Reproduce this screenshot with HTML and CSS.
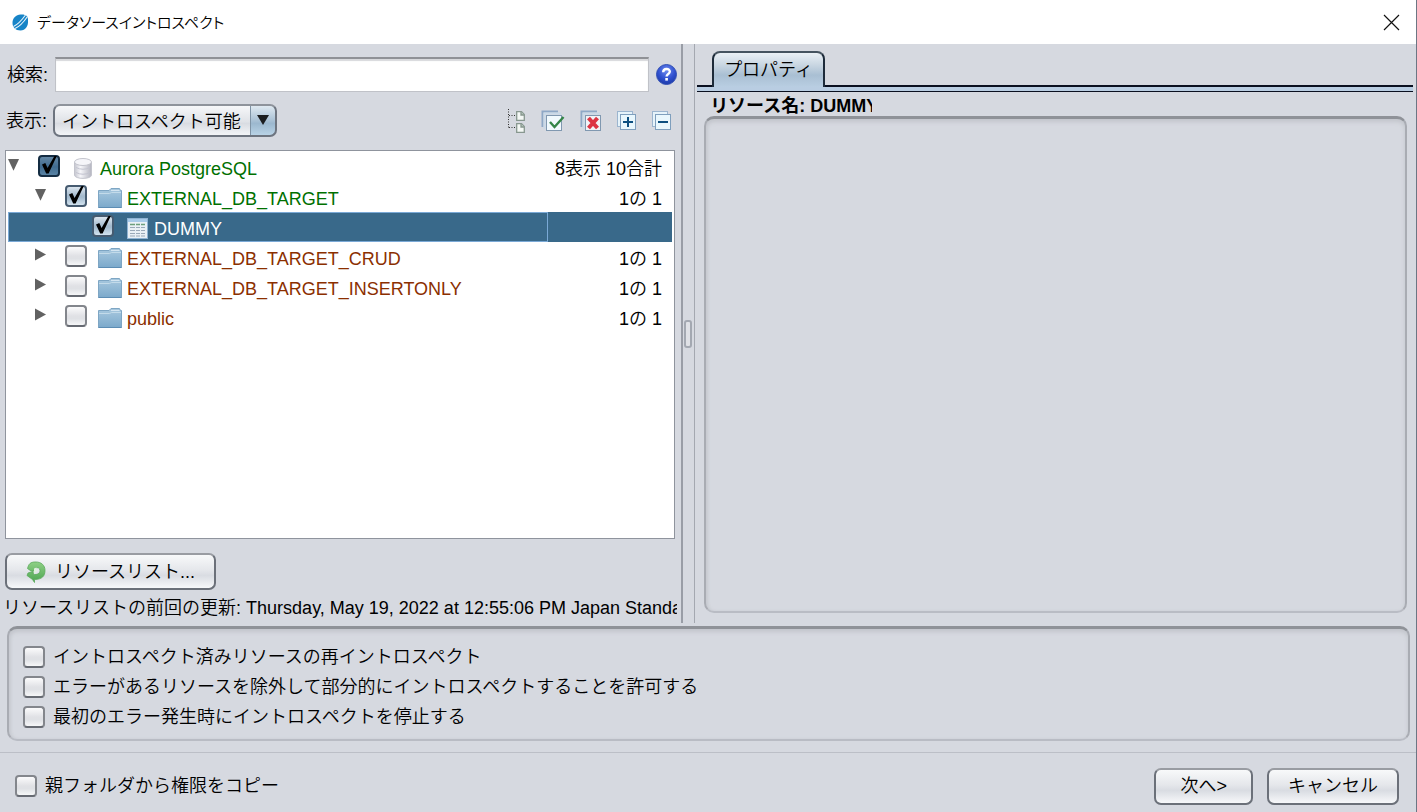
FILE: index.html
```html
<!DOCTYPE html>
<html lang="ja">
<head>
<meta charset="utf-8">
<title>データソースイントロスペクト</title>
<link rel="stylesheet" href="styles.css">
</head>
<body>
<svg class="defs" aria-hidden="true">
  <defs>
    <linearGradient id="g-folder" x1="0" y1="0" x2="0" y2="1"><stop offset="0" stop-color="#a9c9df"/><stop offset="1" stop-color="#7ba9cb"/></linearGradient>
    <linearGradient id="g-db" x1="0" y1="0" x2="1" y2="0"><stop offset="0" stop-color="#c4c5ce"/><stop offset=".35" stop-color="#f6f6fa"/><stop offset="1" stop-color="#b4b5c0"/></linearGradient>
    <radialGradient id="g-help" cx=".5" cy=".3" r=".7"><stop offset="0" stop-color="#6f8cf0"/><stop offset=".6" stop-color="#2f50cf"/><stop offset="1" stop-color="#1c3aa8"/></radialGradient>
    <linearGradient id="g-green" x1="0" y1="0" x2="0" y2="1"><stop offset="0" stop-color="#8fd085"/><stop offset="1" stop-color="#4ba450"/></linearGradient>
    <symbol id="folder" viewBox="0 0 24 20">
      <path d="M.5 2.500H11L13 .5H21.500L22.500 2.500H23.500V19.500H.5Z" fill="url(#g-folder)" stroke="#7ea6c4"/>
      <path d="M1 5.500H11.500L13.500 4.500H23" fill="none" stroke="#c3dbea"/>
      <path d="M13 2.500H21.500" stroke="#d3e5f1"/>
      <path d="M.5 19.500H23.500" stroke="#5c8db4"/>
    </symbol>
  </defs>
</svg>
<div class="dialog">
  <header class="titlebar">
    <svg class="app-logo" width="17" height="17" viewBox="0 0 17 17" aria-hidden="true">
      <path d="M8.500 .5C13.500 0 16.500 2 16 6.500C16.500 12 13.500 16.500 8.500 16.500C3.500 16.500 .3 13 .5 8.500C.7 4 4 .8 8.500 .5Z" fill="#1784c7"/>
      <path d="M1.500 12.500Q7 10 13.500 1M3 14.500Q9 12 15.500 2.500" fill="none" stroke="#e8f4fb" stroke-width="1.100"/>
    </svg>
    <h1 class="title">データソースイントロスペクト</h1>
    <button class="close" type="button" aria-label="閉じる">
      <svg width="17" height="17" viewBox="0 0 17 17"><path d="M1 1L16 16M16 1L1 16" stroke="#111" stroke-width="1.200"/></svg>
    </button>
  </header>

  <main class="split">
    <section class="left">
      <div class="search-row">
        <label for="search">検索:</label>
        <input id="search" class="search" type="text">
        <button class="icon-btn" type="button" aria-label="ヘルプ">
          <svg width="21" height="21" viewBox="0 0 21 21"><circle cx="10.500" cy="10.500" r="10" fill="url(#g-help)" stroke="#3350b5"/><path d="M7.200 8.300C7.200 3.800 14 4 13.800 7.800C13.700 10 10.600 10 10.600 12.500" fill="none" stroke="#fff" stroke-width="2.400"/><rect x="9.300" y="14" width="2.600" height="2.600" fill="#fff"/></svg>
        </button>
      </div>
      <div class="filter-row">
        <label for="filter">表示:</label>
        <span class="combo"><select id="filter"><option>イントロスペクト可能</option></select></span>
        <div class="tools">
          <button class="icon-btn" type="button" aria-label="ツリー">
            <svg width="22" height="26" viewBox="0 0 22 26"><path d="M4.500 1V20.500M5 7.500H12M5 19.500H12" fill="none" stroke="#333" stroke-dasharray="1 1.500"/><g fill="#f4f8f5" stroke="#87978f" stroke-width="1.300"><path d="M12.700 3.700H17.500L20.300 6.500V12.300H12.700Z"/><path d="M12.700 15.700H17.500L20.300 18.500V24.300H12.700Z"/><path d="M17 3.700V7H20.300M17 15.700V19H20.300" fill="#b5c6bb"/></g></svg>
          </button>
          <button class="icon-btn" type="button" aria-label="すべて選択">
            <svg width="24" height="22" viewBox="0 0 24 22"><path d="M1.500 17V1.500H17" fill="none" stroke="#8ea8c6" stroke-width="2"/><path d="M3.500 19V3.500H20" fill="none" stroke="#c9d9e8" stroke-width="2"/><rect x="5.500" y="5.500" width="15" height="15" fill="#f1f9fd" stroke="#8098b0"/><path d="M9 12L13.500 17L22.500 7" fill="none" stroke="#348547" stroke-width="2.400"/></svg>
          </button>
          <button class="icon-btn" type="button" aria-label="すべて解除">
            <svg width="22" height="22" viewBox="0 0 22 22"><path d="M1.500 17V1.500H17" fill="none" stroke="#8ea8c6" stroke-width="2"/><path d="M3.500 19V3.500H20" fill="none" stroke="#c9d9e8" stroke-width="2"/><rect x="5.500" y="5.500" width="15" height="15" fill="#f1f3f7" stroke="#8098b0"/><path d="M8.500 8L17.500 18M17.500 8L8.500 18" stroke="#dc3443" stroke-width="4"/></svg>
          </button>
          <button class="icon-btn" type="button" aria-label="展開">
            <svg width="20" height="20" viewBox="0 0 20 20"><rect x=".5" y=".5" width="15" height="15" fill="#e6f3fa" stroke="#9bb5cf"/><rect x="3.500" y="3.500" width="15" height="15" fill="#e9f7fd" stroke="#7f9fbd"/><path d="M6 11H16M11 6V16" stroke="#0c4f80" stroke-width="2"/></svg>
          </button>
          <button class="icon-btn" type="button" aria-label="折りたたみ">
            <svg width="20" height="20" viewBox="0 0 20 20"><rect x=".5" y=".5" width="15" height="15" fill="#e6f3fa" stroke="#9bb5cf"/><rect x="3.500" y="3.500" width="15" height="15" fill="#e9f7fd" stroke="#7f9fbd"/><path d="M6 11H16" stroke="#0c4f80" stroke-width="2"/></svg>
          </button>
        </div>
      </div>

      <div class="tree-box">
        <table class="tree">
          <tbody>
            <tr>
              <td class="name"><div class="node">
                <button class="toggle open" type="button" aria-label="折りたたむ"></button>
                <input id="n1" class="check dark" type="checkbox" checked>
                <span class="ico"><svg width="18" height="21" viewBox="0 0 18 21"><path d="M.5 4V17C.5 21.500 17.500 21.500 17.500 17V4" fill="url(#g-db)" stroke="#c3c4cd"/><ellipse cx="9" cy="4" rx="8.500" ry="3.500" fill="#f5f5f9" stroke="#c3c4cd"/><path d="M2 9.500Q9 13 16 9.500M2 14.500Q9 18 16 14.500" fill="none" stroke="#c3c4d0"/></svg></span>
                <label class="shown" for="n1">Aurora PostgreSQL</label></div></td>
              <td class="count">8表示 10合計</td>
            </tr>
            <tr>
              <td class="name"><div class="node level-2">
                <button class="toggle open" type="button" aria-label="折りたたむ"></button>
                <input id="n2" class="check" type="checkbox" checked>
                <span class="ico"><svg width="24" height="20"><use href="#folder"/></svg></span>
                <label class="shown" for="n2">EXTERNAL_DB_TARGET</label></div></td>
              <td class="count">1の 1</td>
            </tr>
            <tr class="selected">
              <td class="name"><div class="node level-3">
                <span class="toggle-space"></span>
                <input id="n3" class="check" type="checkbox" checked>
                <span class="ico"><svg width="21" height="21" viewBox="0 0 21 21"><rect x=".5" y=".5" width="20" height="20" fill="#e9f0f5" stroke="#8fb3d3"/><rect x="1" y="1" width="19" height="3" fill="#a9cbe9"/><path d="M3 6.500H8M9 6.500H13M14 6.500H18" stroke="#6d9f7d" stroke-width="1.500"/><path d="M3 9.500H8M9 9.500H13M14 9.500H18M3 12.500H8M9 12.500H13M14 12.500H18M3 15.500H8M9 15.500H13M14 15.500H18M3 18H8M9 18H13M14 18H18" stroke="#9aa9b8"/></svg></span>
                <label for="n3">DUMMY</label></div></td>
              <td class="count"></td>
            </tr>
            <tr>
              <td class="name"><div class="node level-2">
                <button class="toggle" type="button" aria-label="展開する"></button>
                <input id="n4" class="check" type="checkbox">
                <span class="ico"><svg width="24" height="20"><use href="#folder"/></svg></span>
                <label class="pending" for="n4">EXTERNAL_DB_TARGET_CRUD</label></div></td>
              <td class="count">1の 1</td>
            </tr>
            <tr>
              <td class="name"><div class="node level-2">
                <button class="toggle" type="button" aria-label="展開する"></button>
                <input id="n5" class="check" type="checkbox">
                <span class="ico"><svg width="24" height="20"><use href="#folder"/></svg></span>
                <label class="pending" for="n5">EXTERNAL_DB_TARGET_INSERTONLY</label></div></td>
              <td class="count">1の 1</td>
            </tr>
            <tr>
              <td class="name"><div class="node level-2">
                <button class="toggle" type="button" aria-label="展開する"></button>
                <input id="n6" class="check" type="checkbox">
                <span class="ico"><svg width="24" height="20"><use href="#folder"/></svg></span>
                <label class="pending" for="n6">public</label></div></td>
              <td class="count">1の 1</td>
            </tr>
          </tbody>
        </table>
      </div>

      <button class="btn refresh" type="button">
        <svg width="20" height="22" viewBox="0 0 20 22" aria-hidden="true"><path d="M2 6C3 2 6 .8 10 1C15 1 19 4 19 9.500C19 15 16 18.500 8.500 18.500V21.500L6.500 18.500L1 14.500L2 12L7 10.500L7.500 13.500C11 14 14 12.500 14 9.500C14 7 11.500 6 9.500 7V10H5L1.500 7.500Z" fill="url(#g-green)" stroke="#5aa95a" stroke-width=".8"/><path d="M8 7.500L10.500 6.500V11L8 12.500Z" fill="#e0f2dd"/></svg>
        リソースリスト...
      </button>
      <p class="status">リソースリストの前回の更新: Thursday, May 19, 2022 at 12:55:06 PM Japan Standard Time</p>
    </section>

    <div class="divider" role="separator" aria-orientation="vertical"><span class="grip"></span></div>

    <section class="right">
      <div class="tabs" role="tablist"><button class="tab" role="tab" aria-selected="true" type="button">プロパティ</button></div>
      <div class="tab-strip"></div>
      <h2 class="resource">リソース名: DUMMY</h2>
      <div class="well properties"></div>
    </section>
  </main>

  <section class="well options">
    <label class="option"><input class="check" type="checkbox">イントロスペクト済みリソースの再イントロスペクト</label>
    <label class="option"><input class="check" type="checkbox">エラーがあるリソースを除外して部分的にイントロスペクトすることを許可する</label>
    <label class="option"><input class="check" type="checkbox">最初のエラー発生時にイントロスペクトを停止する</label>
  </section>

  <footer class="footer">
    <label class="option copy"><input class="check" type="checkbox">親フォルダから権限をコピー</label>
    <button class="btn next" type="button">次へ&gt;</button>
    <button class="btn cancel" type="button">キャンセル</button>
  </footer>
</div>
</body>
</html>
```
FILE: styles.css
```css
* { box-sizing: border-box; }

body {
  margin: 0;
  background: #d6d9e0;
  color: #000;
  font: 350 18px/24px "Liberation Sans", "Noto Sans CJK JP", sans-serif;
}

button, input, select { font: inherit; color: inherit; margin: 0; }
svg { display: block; }
.defs { position: absolute; width: 0; height: 0; }

.dialog {
  display: flex;
  flex-direction: column;
  min-height: 100vh;
  border-right: 1px solid #6c7684;
}

/* Title bar */
.titlebar {
  display: flex;
  align-items: center;
  height: 44px;
  padding: 0 16px 0 12px;
  background: #fff;
}
.title {
  flex: 1;
  margin: 0 0 0 8px;
  font: 350 15px/24px "Noto Sans CJK JP", sans-serif;
  font-feature-settings: "palt";
}
.close, .icon-btn {
  display: flex;
  padding: 0;
  border: 0;
  background: none;
}

/* Split panes */
.split { display: flex; flex: 1; min-height: 0; }
.left {
  display: flex;
  flex-direction: column;
  flex: 676 1 0;
  min-width: 0;
  padding: 13px 4px 0 5px;
}
.search-row { display: flex; align-items: center; padding-left: 2px; }
.search {
  flex: 1;
  min-width: 0;
  height: 35px;
  margin: 0 7px;
  padding: 0 8px;
  border: 1px solid #c0c2c8;
  border-top: 2px solid #8f9196;
  background: #fff;
  box-shadow: inset 0 2px 1px #d8d9dc;
}
.filter-row {
  display: flex;
  align-items: center;
  margin: 12px 0 13px;
  padding-left: 1px;
}
.combo { position: relative; width: 224px; height: 33px; margin-left: 6px; }
.combo select {
  width: 100%;
  height: 100%;
  padding: 2px 30px 0 7px;
  appearance: none;
  border: 2px solid #6d747f;
  border-top-color: #8e939b;
  border-radius: 7px;
  background:
    linear-gradient(#7f93a5, #7f93a5) right 24px top / 1px 100% no-repeat,
    linear-gradient(#dfe9f1, #a9c1d5 50%, #9cb8cf 60%, #b9d3e6) right / 24px 100% no-repeat,
    linear-gradient(#f6f7f9, #dfe2e7 55%, #d9dce2 60%, #f2f4f7);
}
.combo::after {
  content: "";
  position: absolute;
  top: 11px;
  right: 8px;
  width: 12px;
  height: 10px;
  background: #1b1d20;
  clip-path: polygon(0 0, 100% 0, 50% 100%);
  pointer-events: none;
}
.tools { display: flex; align-items: center; gap: 15px; margin: 0 5px 0 auto; }

/* Resource tree */
.tree-box {
  flex: 1;
  margin-right: 2px;
  padding: 1px 2px;
  border: 1px solid #8f949d;
  background: #fff;
}
.tree { width: 100%; border-collapse: collapse; table-layout: fixed; }
.tree td { height: 30px; padding: 0; }
.tree .count { width: 124px; padding: 3px 10px 0 0; text-align: right; }
.node { display: flex; align-items: center; height: 30px; border: 1px solid transparent; border-left: 0; }
.node label { padding-top: 3px; margin-left: 4px; }
.level-2 { padding-left: 27px; }
.level-3 { padding-left: 54px; }
.toggle, .toggle-space { width: 12px; height: 14px; margin-right: 18px; }
.toggle {
  padding: 0;
  border: 0;
  margin-bottom: 5px;
  background: #626262;
  clip-path: polygon(0 8%, 92% 50%, 0 92%);
}
.toggle.open { clip-path: polygon(0 10%, 92% 10%, 46% 95%); }
.node .check { margin-bottom: 3px; }
.ico { display: flex; justify-content: center; width: 26px; margin-left: 10px; padding-top: 2px; }
.shown { color: #007000; }
.pending { color: #8b2f00; }
.selected { background: #39698a; color: #fff; }
.selected .node { border: 1px solid #7aa9d6; padding-left: 53px; }

/* Check boxes */
.check {
  position: relative;
  flex: none;
  width: 22px;
  height: 22px;
  appearance: none;
  border: 2px solid #83868c;
  border-bottom-color: #666a72;
  border-radius: 4px;
  background: linear-gradient(#fbfbfc, #e0e1e5 50%, #dfe1e5 65%, #f6f7f8);
}
.check:checked {
  border-color: #465b70;
  background: linear-gradient(#dbe5ee, #a4bacd 50%, #a6bdd0 60%, #d3e3ef);
}
.check.dark:checked {
  border-color: #142c42;
  background: linear-gradient(#6487a5, #406b8f 55%, #5983a4);
}
.check:checked::before {
  content: "";
  position: absolute;
  inset: -1px 1px 1px 2px;
  background: #000;
  clip-path: polygon(0 50%, 22% 42%, 37% 70%, 82% 4%, 100% 0, 44% 100%, 28% 100%);
}

/* Buttons */
.btn {
  display: flex;
  align-items: center;
  justify-content: center;
  height: 37px;
  padding: 0 19px;
  border: 2px solid #6b7079;
  border-top-color: #999ca2;
  border-radius: 7px;
  background: linear-gradient(#f8f9fa, #e5e7eb 45%, #d9dce2 62%, #f7f8fa);
  white-space: nowrap;
}
.refresh { align-self: flex-start; gap: 9px; margin-top: 14px; }
.status {
  margin: 6px 0 4px -2px;
  overflow: hidden;
  white-space: nowrap;
}

/* Divider */
.divider {
  display: flex;
  align-items: center;
  width: 14px;
  margin-bottom: 1px;
  padding-left: 1px;
  border-left: 2px solid #999da6;
  border-right: 1px solid #a4a8b0;
}
.grip {
  width: 8px;
  height: 28px;
  border: 2px solid #a3a8b1;
  border-radius: 3px;
  background: #dfe1e6;
}

/* Properties pane */
.right {
  display: flex;
  flex-direction: column;
  flex: 720 1 0;
  min-width: 0;
  padding: 7px 3px 11px 2px;
}
.tabs { display: flex; padding-left: 15px; }
.tab {
  height: 36px;
  margin-bottom: -2px;
  padding: 0 10px;
  border: 2px solid #1d2b3a;
  border-top-color: #45535f;
  border-bottom: 0;
  border-radius: 8px 8px 0 0;
  background: linear-gradient(#eaf0f5, #c9d6e2 35%, #a9bfd3 65%, #b9cee2);
  z-index: 1;
}
.tab-strip {
  height: 7px;
  border-top: 2px solid #0a1020;
  border-bottom: 1px solid #0a1020;
  background: #b9cde2;
}
.resource {
  width: 162px;
  margin: 2px 0 -2px 13px;
  overflow: hidden;
  font-size: 18px;
  font-weight: 700;
  line-height: 24px;
  white-space: nowrap;
}
.well {
  border: 2px solid #a9acb3;
  border-top: 3px solid #8f9298;
  border-bottom-color: #b9bcc4;
  border-radius: 10px;
  box-shadow: inset 0 3px 4px #c3c6cc, inset 2px 0 3px #cbced5;
}
.properties { flex: 1; margin: 0 6px 0 7px; }

/* Options */
.options {
  display: flex;
  flex-direction: column;
  gap: 6px;
  margin: 2px 6px 11px 7px;
  padding: 16px 14px 10px;
}
.option { display: flex; align-items: center; gap: 8px; }

.footer {
  display: flex;
  align-items: center;
  gap: 14px;
  height: 60px;
  padding: 7px 17px 0 15px;
  border-top: 1px solid #bcbfc7;
}
.copy { flex: 1; }
.next { padding: 0 24px; }
```
